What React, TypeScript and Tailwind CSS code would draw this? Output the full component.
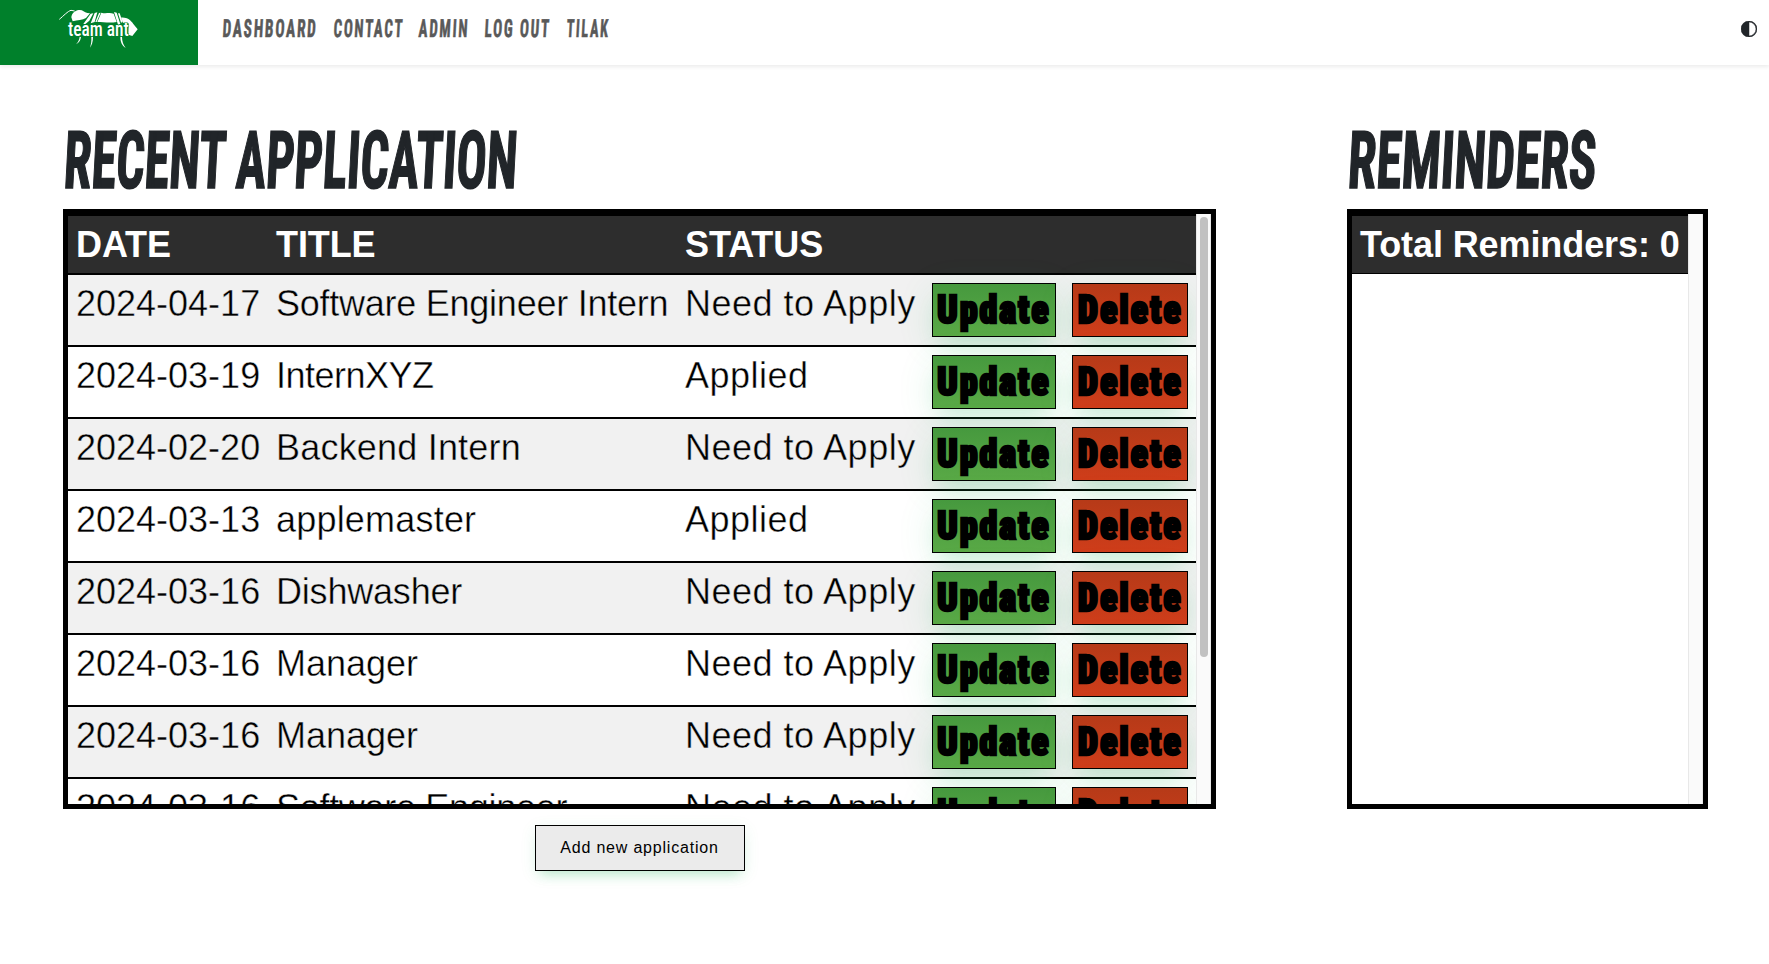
import { BsCircleHalf } from "react-icons/bs";

type Application = { date: string; title: string; status: string; tracking: string };

const applications: Application[] = [
  { date: "2024-04-17", title: "Software Engineer Intern", status: "Need to Apply", tracking: "tracking-[-0.25px]" },
  { date: "2024-03-19", title: "InternXYZ", status: "Applied", tracking: "tracking-[-0.5px]" },
  { date: "2024-02-20", title: "Backend Intern", status: "Need to Apply", tracking: "tracking-[0.2px]" },
  { date: "2024-03-13", title: "applemaster", status: "Applied", tracking: "tracking-[0.2px]" },
  { date: "2024-03-16", title: "Dishwasher", status: "Need to Apply", tracking: "tracking-[-0.2px]" },
  { date: "2024-03-16", title: "Manager", status: "Need to Apply", tracking: "tracking-normal" },
  { date: "2024-03-16", title: "Manager", status: "Need to Apply", tracking: "tracking-normal" },
  { date: "2024-03-16", title: "Software Engineer", status: "Need to Apply", tracking: "tracking-[-0.3px]" },
];

const navItems = [
  { label: "DASHBOARD", width: "w-[94px]", scale: "[transform:skewX(-3deg)_scaleX(0.608)]" },
  { label: "CONTACT", width: "w-[68px]", scale: "[transform:skewX(-3deg)_scaleX(0.59)]" },
  { label: "ADMIN", width: "w-[49px]", scale: "[transform:skewX(-3deg)_scaleX(0.595)]" },
  { label: "LOG OUT", width: "w-[65px]", scale: "[transform:skewX(-3deg)_scaleX(0.6)]" },
  { label: "TILAK", width: "w-[44px]", scale: "[transform:skewX(-3deg)_scaleX(0.565)]" },
];

function Logo() {
  return (
    <svg className="h-[65px] w-[198px]" viewBox="0 0 594 195" fill="#fff">
      <path d="M178 58 C190 48 204 33 213 31 L224 33" fill="none" stroke="#fff" strokeWidth="3" />
      <path d="M214 52 C215 40 226 31 236 30 C247 28 252 36 262 39 L270 40 L258 54 C248 60 232 60 218 64 Z" />
      <path d="M272 41 L280 40 L268 62 L256 72 L250 72 Z M284 39 L292 37 L284 66 L272 70 Z M297 39 L302 38 L290 66 L286 66 Z" />
      <path d="M304 38 C318 42 328 36 341 41 L350 66 C330 70 310 66 292 66 Z" />
      <path d="M342 36 L350 38 L361 72 L354 74 Z M354 40 L359 40 L368 66 L363 68 Z" />
      <path d="M363 53 C380 51 392 60 400 72 L413 88 L397 108 L385 104 L386 70 L369 68 Z" />
      <path d="M239 110 L243 112 C241 124 234 130 228 133 C234 126 238 120 239 110 Z" />
      <path d="M274 110 L279 110 C279 126 275 136 270 143 C273 132 275 124 274 110 Z" />
      <path d="M361 110 L366 110 C366 124 370 134 377 144 C366 136 361 126 361 110 Z" />
      <text
        x="204"
        y="108"
        fontSize="61"
        fontWeight="500"
        fontFamily="'Roboto Condensed', Roboto, sans-serif"
        textLength="182"
        lengthAdjust="spacingAndGlyphs"
        stroke="#00802b"
        strokeWidth="3"
        paintOrder="stroke"
      >
        team ant
      </text>
    </svg>
  );
}

function Heading({ children, scale }: { children: string; scale: string }) {
  return (
    <h1 className="mb-[7px] h-[82px] w-full whitespace-nowrap font-['Roboto_Condensed',Roboto,sans-serif] text-[80px] leading-[82px] font-bold text-[#212529]">
      <span className={`ml-[-1.5px] inline-block origin-bottom-left [-webkit-text-stroke:1.5px_#212529] ${scale}`}>
        {children}
      </span>
    </h1>
  );
}

function ActionButton({ label, kind }: { label: string; kind: "update" | "delete" }) {
  const look =
    kind === "update"
      ? "w-[124px] bg-linear-to-b from-[#46993e] to-[#59a946]"
      : "w-[116px] bg-linear-to-b from-[#b63a18] to-[#cf3d1a]";
  return (
    <button
      className={`inline-flex h-[54px] items-center justify-center border border-black align-top shadow-[0_8px_36px_rgba(44,187,99,0.12),0_14px_22px_-8px_rgba(44,187,99,0.18)] ${look}`}
    >
      <span className="inline-block font-['Roboto_Condensed',Roboto,sans-serif] text-[38px] leading-[52px] font-black tracking-[2px] text-black [transform:scaleX(0.95)] [-webkit-text-stroke:2.4px_#000]">
        {label}
      </span>
    </button>
  );
}

function Scrollbar({ thumb }: { thumb?: boolean }) {
  return (
    <div className="flex w-[15px] shrink-0 justify-center border-x border-[#e8e8e8] bg-[#fafafa] pt-[3px]">
      {thumb && <div className="mr-[-1px] h-[440px] w-2 rounded-full bg-[#c1c1c1]" />}
    </div>
  );
}

export default function App() {
  const th =
    "h-[61px] border-y-2 border-black bg-[#2d2d2d] px-2 text-left align-middle leading-[41px] font-bold tracking-[-0.1px] text-white whitespace-nowrap";
  const td = "h-[72px] border-b-2 border-black p-2 align-top leading-[41px] whitespace-nowrap";
  return (
    <div className="h-[964px] overflow-hidden bg-white font-['Liberation_Sans',Arial,sans-serif] text-black">
      <header className="flex h-[65px] items-start shadow-[0_2px_4px_rgba(0,0,0,0.08)]">
        <div className="h-[65px] w-[198px] bg-[#00802b]">
          <Logo />
        </div>
        <nav className="ml-[23.5px] flex h-[57px] items-center gap-[17px]">
          {navItems.map((item) => (
            <a
              key={item.label}
              className={`${item.width} whitespace-nowrap font-['Roboto_Condensed',Roboto,sans-serif] text-[25px] leading-[25px] font-bold text-[#595959]`}
            >
              <span
                className={`inline-block origin-bottom-left tracking-[3px] [-webkit-text-stroke:0.6px_#595959] ${item.scale}`}
              >
                {item.label}
              </span>
            </a>
          ))}
        </nav>
        <BsCircleHalf className="mt-[21px] mr-3 ml-auto size-4 stroke-[#212529] text-[#212529] [stroke-width:0.5px]" />
      </header>

      <main className="flex justify-between pt-[55px] pr-[61px] pl-[63px]">
        <section className="flex w-[1153px] flex-col items-center">
          <Heading scale="[transform:skewX(-3deg)_scaleX(0.625)]">RECENT APPLICATION</Heading>
          <div className="flex h-[600px] w-full items-stretch overflow-hidden border-[5px] border-black text-[36px]">
            <table className="w-[1128px] shrink-0 table-fixed border-separate border-spacing-0 self-start">
              <colgroup>
                <col className="w-[200px]" />
                <col className="w-[409px]" />
                <col className="w-[247px]" />
                <col className="w-[140px]" />
                <col className="w-[132px]" />
              </colgroup>
              <thead>
                <tr>
                  <th className={th}>DATE</th>
                  <th className={th}>TITLE</th>
                  <th className={th}>STATUS</th>
                  <th className={th} />
                  <th className={th} />
                </tr>
              </thead>
              <tbody>
                {applications.map((a, i) => (
                  <tr
                    key={i}
                    className={
                      i % 2 === 0
                        ? "bg-[#f1f1f1] [-webkit-text-stroke:0.4px_#f1f1f1]"
                        : "bg-white [-webkit-text-stroke:0.4px_#fff]"
                    }
                  >
                    <td className={td}>{a.date}</td>
                    <td className={`${td} ${a.tracking}`}>{a.title}</td>
                    <td className={`${td} tracking-[0.5px]`}>{a.status}</td>
                    <td className={td}>
                      <ActionButton label="Update" kind="update" />
                    </td>
                    <td className={td}>
                      <ActionButton label="Delete" kind="delete" />
                    </td>
                  </tr>
                ))}
              </tbody>
            </table>
            <Scrollbar thumb />
          </div>
          <button className="mt-4 h-[46px] w-[210px] border border-black bg-[#ebebeb] text-[16px] tracking-[0.8px] whitespace-nowrap shadow-[0_4px_16px_rgba(44,187,99,0.1),0_9px_12px_-6px_rgba(44,187,99,0.25)]">
            Add new application
          </button>
        </section>

        <section className="w-[361px]">
          <Heading scale="[transform:skewX(-3deg)_scaleX(0.643)]">REMINDERS</Heading>
          <div className="flex h-[600px] items-stretch overflow-hidden border-[5px] border-black text-[36px]">
            <div className="w-[336px] shrink-0">
              <div className="h-[60px] border-t-2 border-b border-black bg-[#2d2d2d] px-2 leading-[57px] font-bold tracking-[-0.1px] whitespace-nowrap text-white">
                Total Reminders: 0
              </div>
            </div>
            <Scrollbar />
          </div>
        </section>
      </main>
    </div>
  );
}
